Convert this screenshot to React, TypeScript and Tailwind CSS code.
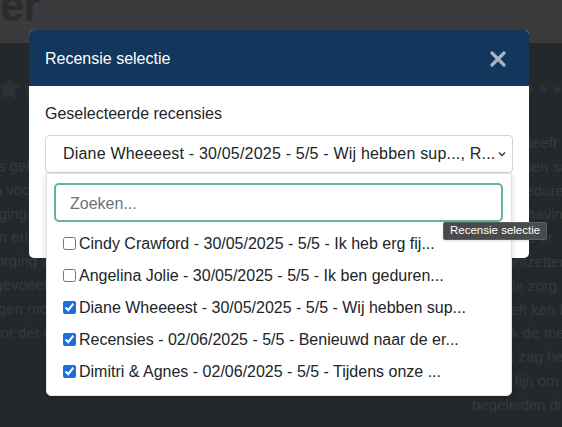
import { Star } from "lucide-react";

const leftLines = [
  "voor de zorg in ons gebedde",
  "Wij danken iedereen voor k de",
  "Het was fijn en we gingen uit.",
  "Hij was heel tevreden en ook s",
  "Het eten en de verzorging was",
  "Wij hebben ons altijd gevoeeld d",
  "en dat wij alles vragen mocht",
  "Een echte aanrader dus voor der dus",
];

const rightLines = [
  "Wij zijn heeft",
  "We hebben samen",
  "Ik ben gedurende",
  "De beschaving",
  "Altijd was er",
  "Echt ontzettend lijk c",
  "Voor de zorg aan",
  "Hij heeft ken het",
  "En ook de medische",
  "Ook ik zag het",
  "Het is fijn om de",
  "begeleiden die",
];

const options = [
  { label: "Cindy Crawford - 30/05/2025 - 5/5 - Ik heb erg fij...", checked: false },
  { label: "Angelina Jolie - 30/05/2025 - 5/5 - Ik ben geduren...", checked: false },
  { label: "Diane Wheeeest - 30/05/2025 - 5/5 - Wij hebben sup...", checked: true },
  { label: "Recensies - 02/06/2025 - 5/5 - Benieuwd naar de er...", checked: true },
  { label: "Dimitri & Agnes - 02/06/2025 - 5/5 - Tijdens onze ...", checked: true },
];

function Stars() {
  return (
    <div className="flex gap-[3px]">
      {[0, 1, 2, 3, 4].map((i) => (
        <Star key={i} size={22} className="fill-[#2d3034] text-[#2d3034]" />
      ))}
    </div>
  );
}

export default function App() {
  return (
    <div
      className="relative w-[562px] h-[427px] overflow-hidden bg-[#24282b]"
      style={{ fontFamily: '"Liberation Sans", Arial, sans-serif' }}
    >
      {/* dimmed page behind the modal */}
      <div className="h-[43px] bg-[#3a3b3d] overflow-hidden">
        <div className="mt-[-22px] text-[44px] font-bold text-[#2a2b2d] leading-[56px] tracking-tight">
          er
        </div>
      </div>
      <div className="flex justify-between">
        <div className="ml-[-180px] w-[260px] pt-[35px]">
          <div className="flex justify-end pr-[10px]">
            <Stars />
          </div>
          <div className="mt-[54px] text-[15px] leading-[23.8px] text-[#363a3e] text-right whitespace-nowrap pr-[12px]">
            {leftLines.map((l, i) => (
              <div key={i}>{l}</div>
            ))}
          </div>
        </div>
        <div className="w-[130px] pt-[35px] mr-[-30px]">
          <div className="pl-[62px]">
            <Stars />
          </div>
          <div className="mt-[31px] text-[15px] leading-[23.8px] text-[#363a3e] whitespace-nowrap pl-[10px]">
            {rightLines.map((l, i) => (
              <div key={i}>{l}</div>
            ))}
          </div>
        </div>
      </div>

      {/* modal */}
      <div className="absolute left-[29px] top-[30px] w-[500px] rounded-[5px] overflow-hidden bg-white">
        <div className="h-[56px] bg-[#12365c] flex items-center justify-between px-4 pt-[1px]">
          <span className="text-white text-[16px]">Recensie selectie</span>
          <svg width="16" height="16" viewBox="0 0 16 16" className="mr-[7px]">
            <path d="M2 2 L14 14 M14 2 L2 14" stroke="#a8b4c2" strokeWidth="3.2" strokeLinecap="round" />
          </svg>
        </div>
        <div className="px-4 pt-[16px] h-[172px]">
          <div className="text-[16px] leading-[24px] text-[#212529] mb-[9px]">Geselecteerde recensies</div>
          <div className="h-[38px] border border-[#ced4da] rounded-[4px] flex items-center pl-[17px] pr-[5px] text-[16px] text-[#212529]">
            <span className="flex-1 whitespace-nowrap overflow-hidden tracking-[0.2px]">
              Diane Wheeeest - 30/05/2025 - 5/5 - Wij hebben sup..., R...
            </span>
            <svg width="10" height="10" viewBox="0 0 10 10">
              <path d="M2 3.5 L5 6.5 L8 3.5" fill="none" stroke="#333" strokeWidth="1.3" />
            </svg>
          </div>
        </div>
      </div>

      {/* dropdown */}
      <div className="absolute left-[46px] top-[173px] w-[466px] bg-white border border-[#e2e4e7] rounded-b-[5px] shadow-[0_2px_6px_rgba(0,0,0,0.15)] pt-[9px] pb-[8px]">
        <div className="ml-[7px] mr-[8px] h-[39px] border-2 border-[#62b39f] rounded-[5px] flex items-center pl-[14px] pt-[2px] text-[16px] text-[#6c7278]">
          Zoeken...
        </div>
        <div className="mt-[5px]">
          {options.map((o, i) => (
            <label key={i} className="h-[32px] flex items-center pl-[16px] pt-[1px] gap-[3px] text-[16px] text-[#212529]">
              <input
                type="checkbox"
                readOnly
                checked={o.checked}
                className="w-[13px] h-[13px] m-0 accent-[#1b6fe4]"
              />
              <span className="whitespace-nowrap">{o.label}</span>
            </label>
          ))}
        </div>
      </div>

      {/* tooltip */}
      <div className="absolute left-[443px] top-[222px] h-[18px] px-[6px] flex items-center bg-[#494a4c] border border-[#5e5f61] rounded-[2px] text-white text-[11.5px] whitespace-nowrap shadow">
        Recensie selectie
      </div>
    </div>
  );
}
